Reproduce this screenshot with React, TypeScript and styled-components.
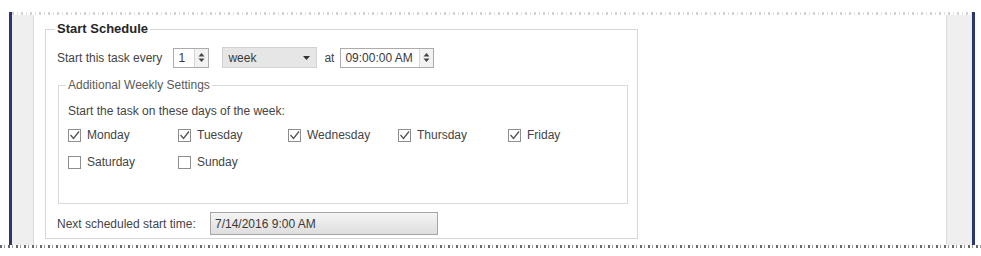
import React from "react";
import styled, { createGlobalStyle } from "styled-components";

const GlobalStyle = createGlobalStyle`
	html, body {
		margin: 0;
		padding: 0;
		background: #ffffff;
	}
	body {
		font-family: "Liberation Sans", Arial, sans-serif;
		font-size: 12px;
		color: #444444;
	}
`;

const Page = styled.div`
	width: 981px;
	height: 256px;
	padding-top: 12px;
	box-sizing: border-box;
	background: #ffffff;
	overflow: hidden;
`;

const Frame = styled.div`
	margin-left: 9px;
	width: 966px;
	height: 233px;
	box-sizing: border-box;
	border-left: 3px solid #2d376f;
	border-right: 3px solid #2d376f;
	display: flex;
	flex-direction: column;
`;

const TornTop = styled.div`
	height: 3px;
	flex-shrink: 0;
	background: repeating-linear-gradient(
		90deg,
		#d2d2d2 0 2px,
		transparent 2px 5px,
		#e0e0e0 5px 6px,
		transparent 6px 9px
	);
`;

const TornBottom = styled.div`
	height: 3px;
	width: 981px;
	background: repeating-linear-gradient(
		90deg,
		#6a6a6a 0 2px,
		transparent 2px 4px,
		#9a9a9a 4px 5px,
		transparent 5px 8px
	);
`;

const Body = styled.div`
	flex: 1;
	display: flex;
`;

const SideStrip = styled.div<{ $side: "left" | "right" }>`
	width: ${(p) => (p.$side === "left" ? "21px" : "25px")};
	background: #efefef;
	${(p) =>
		p.$side === "left"
			? "border-right: 1px solid #dcdcdc;"
			: "border-left: 1px solid #dcdcdc;"}
`;

const Main = styled.div`
	flex: 1;
	padding-left: 11px;
	background: #ffffff;
`;

const GroupBox = styled.fieldset`
	margin: 6px 0 0 0;
	width: 588px;
	box-sizing: border-box;
	padding: 10px 9px 3px 11px;
	border: 1px solid #d6d6d6;
	box-shadow: inset 1px 1px 0 #ffffff;
`;

const GroupTitle = styled.legend`
	padding: 0 2px;
	margin-left: -2px;
	font-size: 13px;
	font-weight: bold;
	line-height: 16px;
	color: #262626;
`;

const InnerBox = styled.fieldset`
	margin: 10px 0 0 1px;
	padding: 11px 9px 32px 9px;
	border: 1px solid #dadada;
`;

const InnerTitle = styled.legend`
	padding: 0 2px;
	margin-left: -2px;
	font-size: 12px;
	line-height: 14px;
	color: #5a5a5a;
`;

const Row = styled.div`
	display: flex;
	align-items: center;
	height: 21px;
`;

const Label = styled.span<{ $width?: number }>`
	line-height: 16px;
	white-space: nowrap;
	${(p) => (p.$width ? `width: ${p.$width}px;` : "")}
`;

const Spin = styled.div<{ $width: number; $gap: number }>`
	margin-left: ${(p) => p.$gap}px;
	width: ${(p) => p.$width}px;
	height: 20px;
	box-sizing: border-box;
	border: 1px solid #ababab;
	background: #ffffff;
	display: flex;
	align-items: center;
	padding-left: 4px;
	font-size: 12px;
	color: #3a3a3a;
`;

const SpinValue = styled.span`
	flex: 1;
`;

const SpinArrows = styled.span`
	width: 13px;
	height: 100%;
	display: flex;
	align-items: center;
	justify-content: center;
	border-left: 1px solid #d6d6d6;
	background: #f2f2f2;
`;

const Dropdown = styled.div`
	margin-left: 13px;
	width: 95px;
	height: 21px;
	box-sizing: border-box;
	border: 1px solid #d2d2d2;
	background: #e6e6e6;
	display: flex;
	align-items: center;
	padding: 0 6px 0 5px;
	color: #3a3a3a;
`;

const DropText = styled.span`
	flex: 1;
`;

const AtLabel = styled.span`
	margin-left: 7px;
`;

const Intro = styled.div`
	line-height: 16px;
	margin-bottom: 7px;
`;

const DayGrid = styled.div`
	display: grid;
	grid-template-columns: repeat(5, 110px);
	grid-auto-rows: 18px;
	row-gap: 9px;
`;

const Day = styled.label`
	display: flex;
	align-items: center;
	gap: 6px;
`;

const Box = styled.span`
	width: 13px;
	height: 13px;
	box-sizing: border-box;
	border: 1px solid #8e8e8e;
	background: #ffffff;
	display: flex;
	align-items: center;
	justify-content: center;
`;

const NextRow = styled.div`
	display: flex;
	align-items: center;
	height: 23px;
	margin-top: 8px;
`;

const ReadOnlyField = styled.div`
	width: 228px;
	height: 23px;
	box-sizing: border-box;
	border: 1px solid #a6a6a6;
	background: linear-gradient(#f5f5f5, #dedede);
	display: flex;
	align-items: center;
	padding-left: 4px;
	color: #3a3a3a;
`;

const days: { name: string; checked: boolean }[] = [
	{ name: "Monday", checked: true },
	{ name: "Tuesday", checked: true },
	{ name: "Wednesday", checked: true },
	{ name: "Thursday", checked: true },
	{ name: "Friday", checked: true },
	{ name: "Saturday", checked: false },
	{ name: "Sunday", checked: false },
];

const UpDown = () => (
	<svg width="7" height="11" viewBox="0 0 7 11">
		<path d="M3.5 1 L6.5 4.5 L0.5 4.5 Z" fill="#444" />
		<path d="M3.5 10 L6.5 6.5 L0.5 6.5 Z" fill="#444" />
	</svg>
);

const Check = () => (
	<svg width="11" height="11" viewBox="0 0 11 11">
		<path d="M1.5 5 L4.5 8.5 L10 1.5" fill="none" stroke="#555" strokeWidth="1.3" />
	</svg>
);

export default function App() {
	return (
		<Page>
			<GlobalStyle />
			<Frame>
				<TornTop />
				<Body>
					<SideStrip $side="left" />
					<Main>
						<GroupBox>
							<GroupTitle>Start Schedule</GroupTitle>
							<Row>
								<Label>Start this task every</Label>
								<Spin $width={36} $gap={11}>
									<SpinValue>1</SpinValue>
									<SpinArrows>
										<UpDown />
									</SpinArrows>
								</Spin>
								<Dropdown>
									<DropText>week</DropText>
									<svg width="7" height="4" viewBox="0 0 7 4">
										<path d="M0 0 L7 0 L3.5 4 Z" fill="#333" />
									</svg>
								</Dropdown>
								<AtLabel>at</AtLabel>
								<Spin $width={94} $gap={6}>
									<SpinValue>09:00:00 AM</SpinValue>
									<SpinArrows>
										<UpDown />
									</SpinArrows>
								</Spin>
							</Row>
							<InnerBox>
								<InnerTitle>Additional Weekly Settings</InnerTitle>
								<Intro>Start the task on these days of the week:</Intro>
								<DayGrid>
									{days.map((d) => (
										<Day key={d.name}>
											<Box>{d.checked && <Check />}</Box>
											{d.name}
										</Day>
									))}
								</DayGrid>
							</InnerBox>
							<NextRow>
								<Label $width={153}>Next scheduled start time:</Label>
								<ReadOnlyField>7/14/2016 9:00 AM</ReadOnlyField>
							</NextRow>
						</GroupBox>
					</Main>
					<SideStrip $side="right" />
				</Body>
			</Frame>
			<TornBottom />
		</Page>
	);
}
